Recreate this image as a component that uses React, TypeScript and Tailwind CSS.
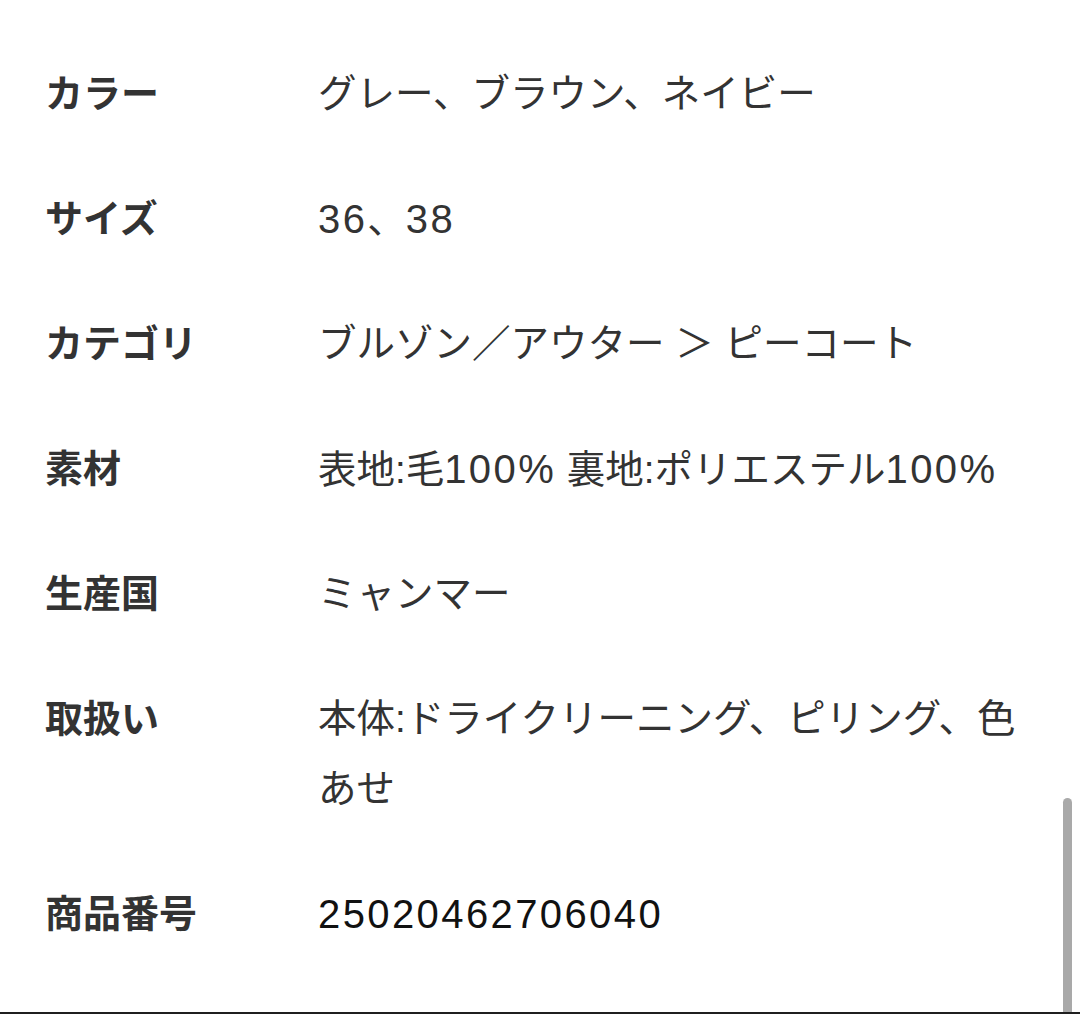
const rows: { label: string; value: string; dark?: boolean }[] = [
  { label: "カラー", value: "グレー、ブラウン、ネイビー" },
  { label: "サイズ", value: "36、38" },
  { label: "カテゴリ", value: "ブルゾン／アウター ＞ ピーコート" },
  { label: "素材", value: "表地:毛100% 裏地:ポリエステル100%" },
  { label: "生産国", value: "ミャンマー" },
  { label: "取扱い", value: "本体:ドライクリーニング、ピリング、色あせ" },
  { label: "商品番号", value: "25020462706040", dark: true },
];

// digits in the original are wider than Liberation's, so stretch number runs a bit
function Value({ text }: { text: string }) {
  const parts = text.split(/([0-9%]+)/);
  return (
    <>
      {parts.map((p, i) =>
        /^[0-9%]+$/.test(p) ? (
          <span key={i} className="text-[40px] tracking-[2.4px]">
            {p}
          </span>
        ) : (
          p
        )
      )}
    </>
  );
}

export default function App() {
  return (
    <div
      className="relative h-[1014px] w-[1080px] overflow-hidden bg-white border-b-2 border-[#1f1f1f]"
      style={{ fontFamily: '"Liberation Sans", "Noto Sans CJK JP", sans-serif' }}
    >
      <div className="flex flex-col gap-[54.6px] pt-[59px] pl-[45px] pr-[40px]">
        {rows.map((r) => (
          <div key={r.label} className="flex text-[38.5px] leading-[70px]">
            <div className="w-[273px] shrink-0 text-[38px] font-bold text-[#333333]">{r.label}</div>
            <div className={`flex-1 min-w-0 ${r.dark ? "text-[#111111]" : "text-[#333333]"}`}>
              <Value text={r.value} />
            </div>
          </div>
        ))}
      </div>
      {/* scroll indicator */}
      <div className="absolute right-[8px] top-[798px] h-[230px] w-[9px] rounded-full bg-[#a9a9a9]" />
    </div>
  );
}
